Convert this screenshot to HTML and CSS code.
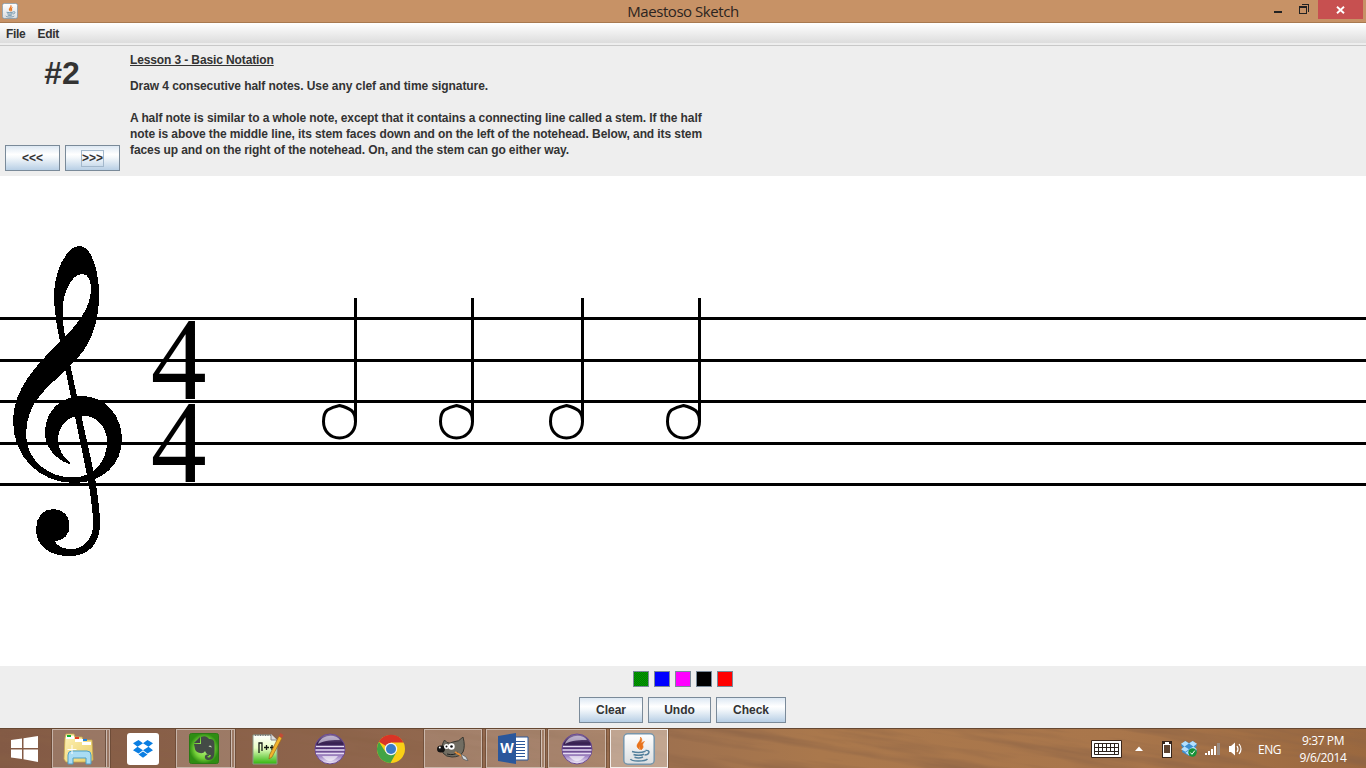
FILE: index.html
```html
<!DOCTYPE html>
<html lang="en">
<head>
<meta charset="utf-8">
<title>Maestoso Sketch</title>
<link rel="stylesheet" href="styles.css">
</head>
<body>
<svg class="defs" width="0" height="0" aria-hidden="true">
  <defs>
    <linearGradient id="orb" x1="0" y1="0" x2="0" y2="1"><stop offset="0" stop-color="#8e7ba8"/><stop offset=".3" stop-color="#36204f"/><stop offset=".5" stop-color="#513078"/><stop offset=".75" stop-color="#a58bc8"/><stop offset="1" stop-color="#f3eefb"/></linearGradient>
    <linearGradient id="tile" x1="0" y1="0" x2="0" y2="1"><stop offset="0" stop-color="#fff"/><stop offset="1" stop-color="#d9dde0"/></linearGradient>
    <radialGradient id="leaf"><stop offset="0" stop-color="#c4f78e"/><stop offset=".65" stop-color="#74cf38"/><stop offset="1" stop-color="#2f8d13"/></radialGradient>
    <linearGradient id="folderfill" x1="0" y1="0" x2="1" y2="1"><stop offset="0" stop-color="#fff3b8"/><stop offset="1" stop-color="#e9cd66"/></linearGradient>
    <linearGradient id="pad" x1="0" y1="0" x2="0" y2="1"><stop offset="0" stop-color="#fff"/><stop offset=".45" stop-color="#eaffc4"/><stop offset="1" stop-color="#31b50d"/></linearGradient>
    <symbol id="eclipse" viewBox="0 0 32 32">
      <circle cx="16" cy="16" r="15" fill="url(#orb)" stroke="#6b4a94"/>
      <path d="M4 11C7 2 21 0 26 7C20 7 10 7 4 11Z" fill="#e3dbee" opacity=".65"/>
      <path d="M2 13.500H30M1.500 17H30.500M2 20.500H30" stroke="#e6dcf3" stroke-width="1.400"/>
      <path d="M8 23Q16 33 24 23Z" fill="#fff" opacity=".6"/>
    </symbol>
    <symbol id="java" viewBox="0 0 32 32">
      <rect x=".8" y=".8" width="30.400" height="30.400" rx="4" fill="url(#tile)" stroke="#7896ab" stroke-width="1.500"/>
      <path d="M16.500 16.500C10 11.500 18.500 9.500 17.500 4C22 9 14 10.500 16.500 16.500M18 17C23 13 17 13 21.500 8.500C16 10 15 13 18 17" fill="#e9731c" stroke="#e9731c" stroke-width=".6"/>
      <path d="M9 18.500Q16 20.500 22.500 18.200M10.500 21.500Q16 23.300 21 21.200M11.500 24.300Q16 25.700 20 24M22.500 17.500C28 16.500 26.500 22 21.500 22M7.500 26C9 29 22 28.500 24.500 26" fill="none" stroke="#53809c" stroke-width="1.500"/>
    </symbol>
    <symbol id="box" viewBox="0 0 20 18">
      <path d="M5.500 0L10 3.200L4.500 6.800L0 3.300ZM14.500 0L20 3.300L15.500 6.800L10 3.200ZM0 10.200L4.500 6.800L10 10.200L5.500 13.500ZM15.500 6.800L20 10.200L14.500 13.500L10 10.200ZM5.500 14.600L10 11.400L14.500 14.600L10 17.800Z"/>
    </symbol>
  </defs>
</svg>
<div class="window">
  <header class="titlebar">
    <svg class="app-icon" viewBox="0 0 32 32"><use href="#java"/></svg>
    <h1 class="title">Maestoso Sketch</h1>
    <div class="controls">
      <svg class="minmax" viewBox="0 0 50 19" shape-rendering="crispEdges"><path d="M6 11h8v2h-8z" fill="#222"/><path d="M33.500 4.500H40.500V11.500M31.500 6.500H38.500V13.500H31.500ZM31 7.500H39" fill="none" stroke="#222"/></svg>
      <button class="close" aria-label="Close"><svg viewBox="0 0 9 8"><path d="M1 .8L8 7.200M8 .8L1 7.200" stroke="#fff" stroke-width="1.900"/></svg></button>
    </div>
  </header>
  <nav class="menubar"><span>File</span><span>Edit</span></nav>
  <section class="lesson">
    <div class="lesson-nav">
      <div class="number">#2</div>
      <div class="nav-buttons"><button class="btn">&lt;&lt;&lt;</button><button class="btn"><span class="focus">&gt;&gt;&gt;</span></button></div>
    </div>
    <div class="lesson-text">
      <p class="heading">Lesson 3 - Basic Notation</p>
      <p class="task">Draw 4 consecutive half notes. Use any clef and time signature.</p>
      <p class="info">A half note is similar to a whole note, except that it contains a connecting line called a stem. If the half<br>note is above the middle line, its stem faces down and on the left of the notehead. Below, and its stem<br>faces up and on the right of the notehead. On, and the stem can go either way.</p>
    </div>
  </section>
  <main class="sheet">
    <svg viewBox="0 176 1366 490" width="1366" height="490">
      <defs><g id="note"><path d="M0 298V422"/><path d="M0 421.500C0 431-6.500 438-16 438C-25.500 438-32 431-32 421.500C-32 417-30.500 412-28 410Q-23 407-16 405.500Q-8 407.500-4 410.500Q0 414 0 421.500"/></g></defs>
      <path d="M0 318.500H1366M0 360.500H1366M0 401.500H1366M0 443.500H1366M0 484.500H1366" stroke="#000" stroke-width="3"/>
      <g class="clef" shape-rendering="crispEdges">
        <path fill-rule="evenodd" d="M79.500 246C92 246 99 272 99 294C99 323 91 347 70 366L65 371C48 387 26 402 26 435C26 461 50 477.500 72 477.500C94 477.500 107 461 107 442C107 427 97 415.500 82 415.500C68 415.500 58 426 58 440C58 450 64 458 70.500 462.500L69 464C55 459 45 447 45 432C45 412 60 396 82 396C106 396 122 417 122 439C122 465 102 483 74 483C40 483 13 457 13 421C13 389 37 364 60 342C57 328 54 310 54 294C54 273 66 246 79.500 246ZM65 337C75 326 91 309 91 289C91 280 88 274 82.500 274C70 274 62.500 296 62.500 311C62.500 321 64 329 65 337Z"/>
        <path d="M65 368L70 364L95 478C97 492 100 508 100 524C100 544 88 556 70 556C49 556 36 546 36 529C36 517 43 509 53 509C63 509 69.500 516 69.500 525C69.500 535 64 540 55 541.500C57 546 63 549 71 549C84 549 93 539 93 524C93 508 90 493 88 480Z"/>
      </g>
      <g class="meter"><text transform="translate(150.700 398.500) scale(.94 1)">4</text><text transform="translate(150.700 481.500) scale(.94 1)">4</text></g>
      <g class="notes"><use href="#note" x="355.500"/><use href="#note" x="472.500"/><use href="#note" x="582.500"/><use href="#note" x="699.500"/></g>
    </svg>
  </main>
  <section class="toolbar">
    <div class="swatches"><i class="green"></i><i class="blue"></i><i class="magenta"></i><i class="black"></i><i class="red"></i></div>
    <div class="actions"><button class="btn clear">Clear</button><button class="btn undo">Undo</button><button class="btn check">Check</button></div>
  </section>
  <footer class="taskbar">
    <svg class="wood" viewBox="0 0 1366 40" preserveAspectRatio="none"><defs><filter id="grain" x="0" y="0" width="100%" height="100%"><feTurbulence type="fractalNoise" baseFrequency=".008 .09" numOctaves="4" seed="8"/><feColorMatrix values="0 0 0 0 .25  0 0 0 0 .12  0 0 0 0 .06  1.500 0 0 0 -.6"/></filter></defs><rect x="-40" y="-300" width="1500" height="600" filter="url(#grain)" transform="rotate(9 683 20)"/></svg>
    <div class="apps">
      <div class="slot start"><svg width="27" height="26" viewBox="0 0 27 26"><path d="M0 4L11 2.500V12H0ZM12.500 2.300L27 0V12H12.500ZM0 13.500H11V23L0 21.500ZM12.500 13.500H27V26L12.500 23.300Z" fill="#fff"/></svg></div>
      <div class="slot open stacked explorer"><svg width="33" height="32" viewBox="0 0 33 32"><path d="M2 5L3 1H11L12 4H19L20 7H29L30 27L27 29H3L1 26Z" fill="url(#folderfill)" stroke="#c9a94c" stroke-width=".8"/><path d="M3 3H11V6H3ZM12 6H20V9H12ZM19 9H28V12H19Z" fill="#fff"/><path d="M4 2h4v2H4z" fill="#13b42e"/><path d="M12 4h4v2h-4z" fill="#e54123"/><path d="M20 6h4v2h-4z" fill="#1d83dc"/><path d="M5 31V22Q5 18 9 18H24Q28 18 28 22V31H23V25H10V31Z" fill="#a9dcf4" stroke="#4d9fc5"/><path d="M9 12V21M4.500 16.500H13.500" stroke="#fff"/></svg></div>
      <div class="slot dropbox"><svg width="32" height="32" viewBox="0 0 32 32"><rect width="32" height="32" rx="3" fill="#fff"/><use href="#box" x="6" y="7" width="20" height="18" fill="#0a7ee2"/></svg></div>
      <div class="slot open stacked evernote"><svg width="30" height="31" viewBox="0 0 30 31"><rect x=".5" y=".5" width="29" height="30" rx="2" fill="url(#leaf)" stroke="#2a7a14"/><path d="M5 10L11 4V10Z" fill="#444"/><path d="M5 11H12V4C16 2 19 4 20 6C24 6 25.500 7 25.500 12C25.500 18 26 24 23 26C20 28 15 27 16 23C17 21 20 21 20 23H18.500C18 25.500 22 25 22 22C18 22 17 20 16 18C14 22 7 20 6 16Z" fill="#444b46"/><path d="M19.500 13.500Q21.500 11 23 14.500Z" fill="#c8d8bd"/></svg></div>
      <div class="slot notepad"><svg width="32" height="32" viewBox="0 0 32 32"><path d="M1 2H19L25 7V31H1Z" fill="url(#pad)" stroke="#8a9b88"/><path d="M3 2H19" stroke="#777" stroke-width="2" stroke-dasharray="1 1.500"/><path d="M19 1V7H25" fill="#ddd" stroke="#888"/><path d="M7 20V10H10V18M12 14.500H17M14.500 12V17M18 14.500H22M20 12V17" fill="none" stroke="#151b15" stroke-width="1.300"/><path d="M27 3L30 5L20 24L17 26L17.500 22Z" fill="#f3b52c" stroke="#9a651b" stroke-width=".7"/><path d="M27 3L28.500 0L31.500 2L30 5Z" fill="#c24b36"/></svg></div>
      <div class="slot eclipse-a"><svg width="32" height="32"><use href="#eclipse"/></svg></div>
      <div class="slot chrome"><svg width="30" height="30" viewBox="0 0 30 30"><circle cx="15" cy="15" r="14" fill="#f9cf16"/><path d="M15 15L3 7.700A14 14 0 0 1 27.500 8.500H15Z" fill="#d93426"/><path d="M3 7.700A14 14 0 0 0 14.500 29L20.500 18L9.500 18Z" fill="#43a445"/><circle cx="15" cy="15" r="6.200" fill="#f4f5f3"/><circle cx="15" cy="15" r="5" fill="#397cc8"/></svg></div>
      <div class="slot open gimp"><svg width="32" height="24" viewBox="0 0 32 24"><path d="M6 6L7.500 3L10 5.500Q13 7 16 5Q22 5 26 0Q28.500 9 26 15Q23 20 15 20Q9 20 6 16Q4 9 6 6Z" fill="#716d62" stroke="#393832"/><ellipse cx="4" cy="12" rx="4" ry="3.500" fill="#141414"/><circle cx="2.800" cy="10.500" r="1" fill="#fff"/><circle cx="9.500" cy="9.500" r="2.500" fill="#fff"/><circle cx="14.500" cy="9.500" r="3.200" fill="#fff"/><circle cx="9.500" cy="9.500" r="1" fill="#111"/><circle cx="14.500" cy="9.500" r="1.300" fill="#111"/><path d="M10 17Q17 19 21 15" fill="none" stroke="#222"/><path d="M18 15L25 19" stroke="#e58d35" stroke-width="2"/><path d="M24 17L29 20L31 24L26 22Z" fill="#d6dadd" stroke="#434b50" stroke-width=".6"/></svg></div>
      <div class="slot open stacked word"><svg width="32" height="32" viewBox="0 0 32 32"><path d="M16 4H30V27H16Z" fill="#fff" stroke="#2b579a"/><path d="M18 8.500H27M18 11.500H27M18 14.500H27M18 17.500H27M18 20.500H27M18 23.500H27" stroke="#2b579a"/><path d="M0 3L18 0V31L0 28Z" fill="#2a579b"/><text class="word-letter" x="9" y="20" text-anchor="middle">W</text></svg></div>
      <div class="slot open eclipse-b"><svg width="32" height="32"><use href="#eclipse"/></svg></div>
      <div class="slot open active javaapp"><svg width="32" height="32"><use href="#java"/></svg></div>
    </div>
    <div class="tray">
      <svg width="155" height="24" viewBox="0 0 155 24">
        <path d="M.5 3.500H30.500V20.500H.5Z" fill="#fff" stroke="#3a2518"/><path d="M3.500 6.500H27.500V17.500H3.500ZM3 10.500H28M3 14.500H28M7.500 6V14M11.500 6V14M15.500 6V14M19.500 6V14M23.500 6V14M7.500 14V18M23.500 14V18" fill="none" stroke="#2b211b"/>
        <path d="M44 14L48 9.500L52 14Z" fill="#fff"/>
        <g shape-rendering="crispEdges"><path d="M71 4H81V21H71Z" fill="#35241a"/><path d="M72 7H74V5H78V7H80V20H72Z" fill="#fff"/><path d="M73 8H79V16H73Z" fill="#5d4330"/></g>
        <path d="M90 8L94 4L98 6L102 4L106 8L104 11L106 14L98 19L91 15L92 11Z" fill="#3d8fd1"/><use href="#box" x="90" y="4" width="16" height="14.500" fill="#b4e0ff"/><circle cx="101.500" cy="15.500" r="4.200" fill="#169237"/><path d="M99.300 15.500L101 17.300L103.800 13.600" fill="none" stroke="#fff"/>
        <g shape-rendering="crispEdges"><path d="M114 16h2v2h-2zM117 14h2v4h-2zM120 12h2v6h-2zM123 9h2v9h-2z" fill="#fff"/><path d="M126 6h3v12h-3z" fill="#9b8b80"/></g>
        <path d="M138 9H140L144 5.500V18.500L140 15H138Z" fill="#fff"/><path d="M146 9Q148 12 146 15M148 7Q152 12 148 17" fill="none" stroke="#fff" stroke-width="1.200"/>
      </svg>
      <span class="lang">ENG</span>
      <div class="clock"><span>9:37 PM</span><span>9/6/2014</span></div>
    </div>
  </footer>
</div>
</body>
</html>
```

FILE: styles.css
```css
* { box-sizing: border-box; }
body { margin: 0; overflow: hidden; background: #eee; color: #333; font: bold 12px/16px "Liberation Sans", Arial, sans-serif; }
p, h1 { margin: 0; }
.defs { position: absolute; }
.window { display: flex; flex-direction: column; width: 1366px; height: 768px; }
.titlebar { display: grid; grid-template-columns: 150px 1fr 150px; height: 23px; background: #c79266; border-bottom: 1px solid #a87950; }
.app-icon { width: 16px; height: 16px; margin: 3px 0 0 2px; }
.title { text-align: center; font: 15px/23px "Open Sans", sans-serif; color: #2c2420; letter-spacing: -.45px; }
.controls { display: flex; justify-content: flex-end; }
.minmax { width: 50px; height: 19px; }
.close { width: 45px; height: 19px; margin-right: 3px; padding: 0; border: 0; background: #c75050; display: flex; justify-content: center; align-items: center; }
.close svg { width: 9px; height: 8px; }
.menubar { height: 23px; display: flex; gap: 12px; padding: 3px 6px 0; letter-spacing: -.3px; background: linear-gradient(#fff, #dcdcdc 92%, #eee 93%); border-bottom: 1px solid #c8c8c8; }
.lesson { display: flex; height: 130px; }
.lesson-nav { width: 130px; padding: 8px 5px 5px; display: flex; flex-direction: column; justify-content: space-between; }
.number { width: 114px; text-align: center; font-size: 32px; line-height: 38px; }
.nav-buttons { display: flex; gap: 5px; }
.btn { height: 26px; width: 55px; padding: 0; border: 1px solid #7a8a99; background: linear-gradient(#dde8f3 0, #fff 35%, #f4f8fb 48%, #b8cfe5 100%); font: inherit; color: #333; }
.focus { display: inline-block; border: 1px solid #a3b8cc; line-height: 15px; }
.lesson-text { padding-top: 6px; }
.heading { text-decoration: underline; margin-bottom: 10px; letter-spacing: -.12px; }
.task { margin-bottom: 16px; letter-spacing: -.064px; }
.info { letter-spacing: -.087px; }
.sheet { height: 490px; background: #fff; }
.sheet svg { display: block; }
.meter { font: 119px "Liberation Serif", serif; fill: #000; }
.notes { fill: none; stroke: #000; stroke-width: 3; }
.toolbar { height: 62px; padding-top: 5px; display: flex; flex-direction: column; align-items: center; gap: 10px; }
.swatches { display: flex; gap: 5px; height: 16px; }
.swatches i { width: 16px; height: 16px; border: 1px solid #7a8a99; }
.green { background: repeating-conic-gradient(#007800 0 25%, #00a000 0 50%) 0 0 / 2px 2px; }
.blue { background: #00f; }
.magenta { background: #f0f; }
.black { background: #000; }
.red { background: #f00; }
.actions { display: flex; gap: 5px; margin-right: 1px; }
.clear { width: 64px; }
.undo { width: 63px; }
.check { width: 70px; }
.taskbar { height: 40px; display: grid; grid-template: 40px / 1fr auto; overflow: hidden; border-top: 1px solid #664832; background: linear-gradient(90deg, #835a45, #956b50 40%, #aa784c 60%, #a9764b 82%, #9a683f); }
.wood { grid-area: 1 / 1 / 2 / 3; width: 1366px; height: 40px; }
.apps { grid-area: 1 / 1; display: flex; z-index: 1; }
.slot { height: 39px; flex: none; display: flex; align-items: center; justify-content: center; border: 1px solid transparent; }
.open { background: #ffffff29; border-color: #ffffff70; box-shadow: 0 0 0 1px #4e35266e; }
.stacked { padding-right: 4px; background: linear-gradient(90deg, #4e352690 1px, #ffffff80 1px) right 2px top 0 / 2px 100% no-repeat, #ffffff29; }
.active { background: #ffffff60; border-color: #ffffffd0; }
.start { width: 50px; padding-right: 1px; }
.explorer { width: 58px; margin-left: 2px; }
.dropbox { width: 64px; padding-left: 2px; }
.evernote { width: 59px; margin-left: 2px; }
.notepad { width: 64px; padding-left: 1px; }
.eclipse-a { width: 60px; padding-left: 1px; }
.chrome { width: 65px; padding-right: 1px; }
.gimp { width: 58px; }
.word { width: 59px; margin-left: 4px; }
.eclipse-b { width: 58px; margin-left: 3px; }
.javaapp { width: 58px; margin-left: 4px; }
.word-letter { font: bold 14px "Open Sans", sans-serif; fill: #fff; }
.tray { grid-area: 1 / 2; z-index: 1; display: flex; align-items: center; width: 275px; color: #fff; font: 12px/17px "Open Sans", sans-serif; }
.tray > svg { flex: none; }
.lang { width: 25px; margin-left: 12px; letter-spacing: -.5px; }
.clock { width: 56px; margin-left: 12px; display: flex; flex-direction: column; align-items: center; letter-spacing: -.4px; white-space: nowrap; }
```
